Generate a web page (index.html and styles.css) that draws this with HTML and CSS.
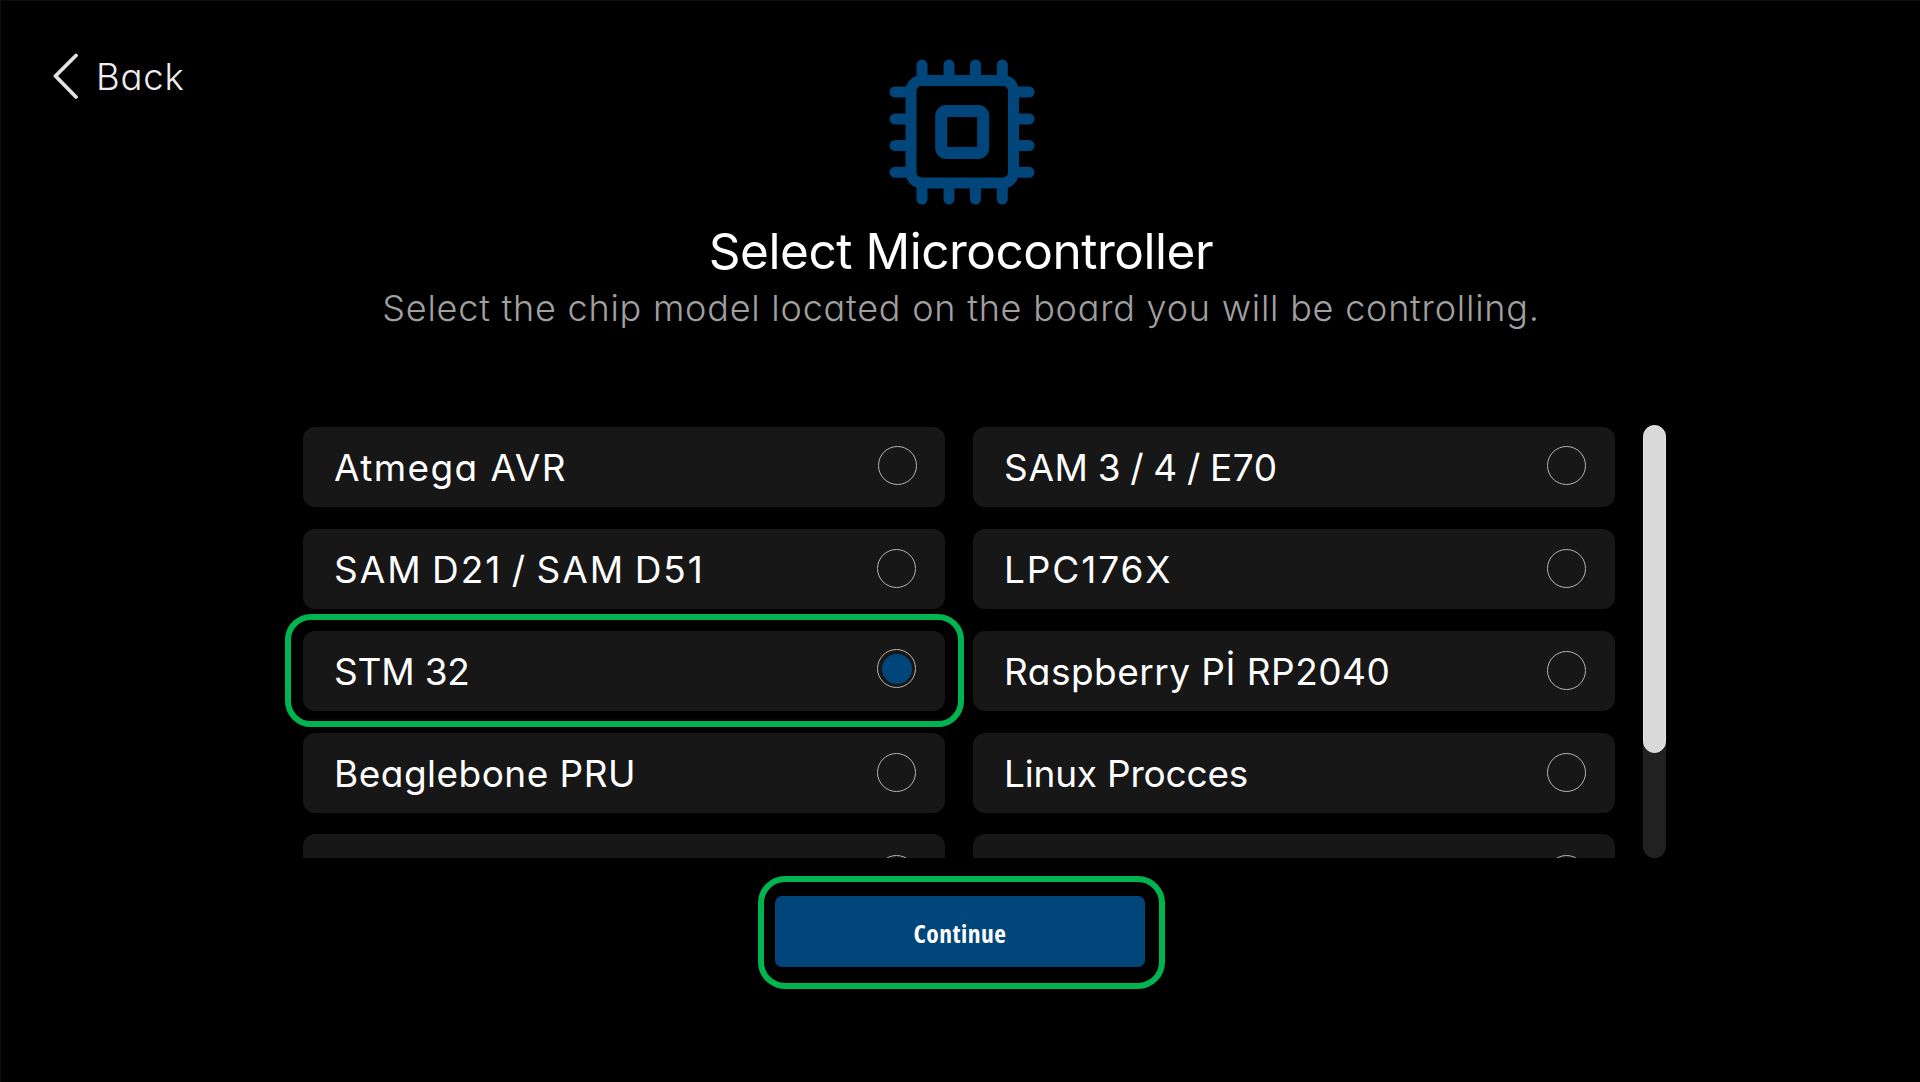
FILE: index.html
```
<!DOCTYPE html>
<html lang="en">
<head>
<meta charset="utf-8">
<title>Select Microcontroller</title>
<link rel="stylesheet" href="styles.css">
</head>
<body>
<div class="page">
  <header class="top">
    <a class="back">
      <svg class="chevron" width="26" height="48" viewBox="0 0 26 48"><path d="M24 2.500 L3.500 23 L24 44" fill="none" stroke="#e3e3e3" stroke-width="3.800" stroke-linecap="round" stroke-linejoin="round"/></svg>
      <span>Back</span>
    </a>
    <svg class="chip" width="148" height="148" viewBox="18 18 148 148" fill="none" stroke="#00467a" stroke-width="11" stroke-linecap="round">
      <rect x="41" y="40.500" width="102.500" height="102.500" rx="10.500"/>
      <rect x="71.200" y="71" width="42" height="42" rx="5" stroke-width="12" stroke-linejoin="round"/>
      <path d="M52 36V25M79 36V25M105.500 36V25M132.300 36V25M52 148V159M79 148V159M105.500 148V159M132.300 148V159M37 52H25M37 79H25M37 105.500H25M37 132.300H25M147 52H159M147 79H159M147 105.500H159M147 132.300H159"/>
    </svg>
  </header>
  <h1 class="title">Select Microcontroller</h1>
  <p class="subtitle">Select the chip model located on the board you will be controlling.</p>

  <main class="picker">
    <div class="options">
      <div class="option"><span class="s-wide">Atmega AVR</span><i class="radio first"></i></div>
      <div class="option"><span class="s-tight">SAM 3 / 4 / E70</span><i class="radio"></i></div>
      <div class="option"><span class="s-chips">SAM D21 / SAM D51</span><i class="radio"></i></div>
      <div class="option"><span class="s-digits">LPC176X</span><i class="radio"></i></div>
      <div class="option selected"><span class="s-short">STM 32</span><i class="radio checked"></i></div>
      <div class="option"><span class="s-mid">Raspberry Pİ RP2040</span><i class="radio"></i></div>
      <div class="option"><span class="s-mid">Beaglebone PRU</span><i class="radio"></i></div>
      <div class="option"><span class="s-short">Linux Procces</span><i class="radio"></i></div>
      <div class="option last"><i class="radio"></i></div>
      <div class="option last"><i class="radio"></i></div>
    </div>
    <div class="scrollbar"><div class="thumb"></div></div>
  </main>

  <div class="action"><button class="continue">Continue</button></div>
</div>
</body>
</html>
```
FILE: styles.css
```
* { box-sizing: border-box; }
body { margin: 0; background: #000; }
.page {
  width: 1920px;
  height: 1082px;
  overflow: hidden;
  background: #000;
  border-top: 1px solid #0e0e0e;
  border-left: 1px solid #0e0e0e;
  color: #fff;
  font-family: Inter, "Open Sans", sans-serif;
  font-feature-settings: "cv11";
  font-weight: 400;
}
.top {
  display: grid;
  grid-template-columns: 887px 148px;
  height: 220px;
  padding-top: 57px;
}
.back {
  display: flex;
  height: 38px;
  align-items: center;
  gap: 18px;
  padding-left: 51px;
  font-size: 36.5px;
  font-weight: 300;
  letter-spacing: 0.8px;
  color: #eee;
}
.chip { display: block; }
.title {
  margin: 0;
  padding-left: 1px;
  text-align: center;
  font-size: 49.5px;
  line-height: 60px;
  font-weight: 400;
  letter-spacing: -0.47px;
}
.subtitle {
  margin: 5px 0 0;
  padding-left: 1px;
  text-align: center;
  font-size: 36px;
  line-height: 45px;
  font-weight: 300;
  letter-spacing: 0.77px;
  color: #a0a0a0;
}
.picker {
  display: flex;
  justify-content: space-between;
  width: 1363px;
  height: 433px;
  margin: 94px 0 0 302px;
}
.options {
  display: grid;
  grid-template-columns: 642px 642px;
  grid-auto-rows: 80.4px;
  gap: 21.8px 28px;
  height: 433px;
  padding-top: 1.5px;
  clip-path: inset(0 -30px 0 -30px);
}
.option {
  position: relative;
  display: flex;
  align-items: center;
  justify-content: space-between;
  padding: 0 29px 0 31px;
  border-radius: 12px;
  background: #171717;
  font-size: 37px;
  white-space: nowrap;
}
.option span { padding-top: 1px; }
.last { justify-content: flex-end; margin-top: -1px; }
.selected::after {
  content: "";
  position: absolute;
  inset: -17px -19px -16px -18px;
  border: 6.5px solid #00b450;
  border-radius: 26px;
}
.radio {
  width: 39px;
  height: 39px;
  margin-top: -1.6px;
  border: 1.5px solid #b4b4b4;
  border-radius: 50%;
}
.first { margin-right: -1px; }
.checked {
  margin-top: -5px;
  padding: 3.5px;
  background: #00467a content-box;
}
.s-wide { letter-spacing: 1.4px; }
.s-chips { letter-spacing: 2px; word-spacing: -3px; }
.s-digits { letter-spacing: 1.9px; }
.s-mid { letter-spacing: 0.48px; }
.s-short { letter-spacing: -0.2px; }
.s-tight { letter-spacing: 0.65px; word-spacing: -2px; }
.scrollbar {
  width: 23px;
  height: 433px;
  border-radius: 12px;
  background: #212121;
}
.thumb {
  height: 328px;
  border: 1px solid #e6e6e6;
  border-radius: 12px;
  background: #d9d9d9;
}
.action {
  width: 407px;
  height: 113px;
  margin: 18px 0 0 757px;
  padding: 14px 0 0 11px;
  border: 6px solid #00b450;
  border-radius: 27px;
}
.continue {
  display: block;
  width: 370px;
  height: 71px;
  padding: 2px 0 0;
  border: 0;
  border-radius: 7px;
  background: #00467a;
  color: #fff;
  font: 700 25.5px "Open Sans", sans-serif;
  font-stretch: 75%;
  letter-spacing: 0.5px;
}
```
